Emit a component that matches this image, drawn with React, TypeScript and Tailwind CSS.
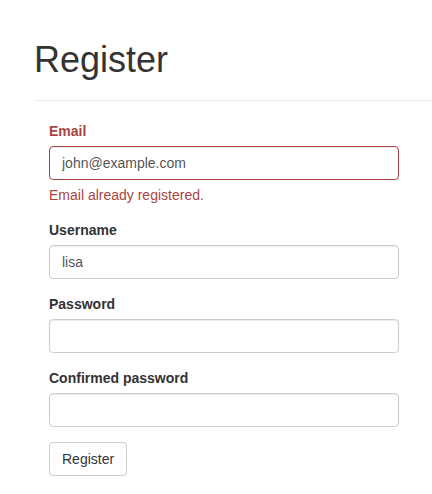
import React from 'react';

interface FieldProps {
  label: string;
  value?: string;
  type?: string;
  error?: string;
}

function Field({ label, value = '', type = 'text', error }: FieldProps) {
  const hasError = !!error;
  return (
    <div className="mb-[15px]">
      <label className={`block mb-[5px] font-bold ${hasError ? 'text-[#a94442]' : 'text-[#333]'}`}>
        {label}
      </label>
      <input
        type={type}
        defaultValue={value}
        className={`block w-full h-[34px] px-3 py-1.5 text-sm text-[#555] bg-white rounded border shadow-[inset_0_1px_1px_rgba(0,0,0,0.075)] outline-none ${hasError ? 'border-[#a94442]' : 'border-[#ccc]'}`}
      />
      {hasError && <p className="mt-[5px] mb-[10px] text-[#a94442]">{error}</p>}
    </div>
  );
}

export default function App() {
  return (
    <div
      className="min-h-screen bg-white pl-[34px] pt-[40px] text-sm leading-5 text-[#333]"
      style={{ fontFamily: '"Liberation Sans", Arial, sans-serif' }}
    >
      <h1 className="text-[36px] leading-[1.1] font-normal">Register</h1>
      <hr className="mt-[20px] mb-[20px] border-t border-[#eee]" />

      <form className="pl-[15px] w-[365px]">
        <Field label="Email" value="john@example.com" error="Email already registered." />
        <Field label="Username" value="lisa" />
        <Field label="Password" type="password" />
        <Field label="Confirmed password" type="password" />
        <button
          type="button"
          className="h-[34px] px-3 border border-[#ccc] rounded bg-white text-[#333] text-sm"
        >
          Register
        </button>
      </form>
    </div>
  );
}
